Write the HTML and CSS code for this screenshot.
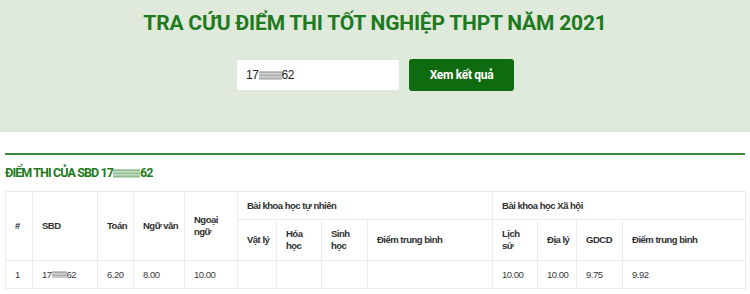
FILE: index.html
```html
<!DOCTYPE html>
<html lang="vi">
<head>
<meta charset="utf-8">
<title>Tra cứu điểm thi</title>
<link rel="stylesheet" href="styles.css">
</head>
<body>
<header class="hero">
  <h1 class="title">TRA CỨU ĐIỂM THI TỐT NGHIỆP THPT NĂM 2021</h1>
  <div class="search">
    <div class="input">17<span class="redact"></span>62</div>
    <button class="btn" type="button">Xem kết quả</button>
  </div>
</header>
<main class="results">
  <div class="rule"></div>
  <h2 class="heading">ĐIỂM THI CỦA SBD 17<span class="redact redact-green"></span>62</h2>
  <table class="scores">
    <colgroup>
      <col class="c27"><col class="c65"><col class="c36"><col class="c51"><col class="c53">
      <col class="c39"><col class="c45"><col class="c46"><col class="c125">
      <col class="c45"><col class="c39"><col class="c46"><col class="c123">
    </colgroup>
    <thead>
      <tr class="r1">
        <th rowspan="2">#</th>
        <th rowspan="2">SBD</th>
        <th rowspan="2">Toán</th>
        <th rowspan="2" class="nowrap">Ngữ văn</th>
        <th rowspan="2">Ngoại ngữ</th>
        <th colspan="4">Bài khoa học tự nhiên</th>
        <th colspan="4">Bài khoa học Xã hội</th>
      </tr>
      <tr class="r2">
        <th class="nowrap">Vật lý</th>
        <th>Hóa học</th>
        <th>Sinh học</th>
        <th>Điểm trung bình</th>
        <th>Lịch sử</th>
        <th class="nowrap">Địa lý</th>
        <th>GDCD</th>
        <th>Điểm trung bình</th>
      </tr>
    </thead>
    <tbody>
      <tr class="r3">
        <td>1</td>
        <td>17<span class="redact redact-sm"></span>62</td>
        <td>6.20</td>
        <td>8.00</td>
        <td>10.00</td>
        <td></td>
        <td></td>
        <td></td>
        <td></td>
        <td>10.00</td>
        <td>10.00</td>
        <td>9.75</td>
        <td>9.92</td>
      </tr>
    </tbody>
  </table>
</main>
</body>
</html>
```
FILE: styles.css
```css
* { box-sizing: border-box; }
html, body { margin: 0; padding: 0; background: #ffffff; }
body { font-family: "Liberation Sans", Arial, sans-serif; color: #333; }

.hero {
  height: 132px;
  background: #dfe9dc;
  padding-top: 11px;
  display: flex;
  flex-direction: column;
  align-items: center;
}
.title {
  margin: 0;
  font-family: Roboto, "Liberation Sans", sans-serif;
  font-weight: 700;
  font-size: 21px;
  line-height: 24px;
  color: #1d7a1d;
  letter-spacing: -0.2px;
}
.search {
  margin-top: 24px;
  display: flex;
  align-items: center;
  gap: 10px;
  margin-left: 1px;
}
.input {
  width: 162px;
  height: 30px;
  background: #fff;
  border-radius: 2px;
  padding-left: 9px;
  display: flex;
  align-items: center;
  font-family: "Liberation Sans", Arial, sans-serif;
  font-size: 12px;
  letter-spacing: -0.4px;
  color: #222;
}
.btn {
  width: 105px;
  height: 32px;
  border: 0;
  border-radius: 3px;
  background: #0f6b0f;
  color: #fff;
  font-family: Roboto, "Liberation Sans", sans-serif;
  font-weight: 700;
  font-size: 12px;
  letter-spacing: -0.3px;
  padding: 0;
}

.redact {
  display: inline-block;
  width: 23px;
  height: 9px;
  vertical-align: -1px;
  background: repeating-linear-gradient(180deg, #b9b9b9 0 1px, #9d9d9d 1px 2px, #c6c6c6 2px 3px);
  opacity: 0.85;
}
.redact-green {
  width: 27px;
  background: repeating-linear-gradient(180deg, #9fc79f 0 1px, #7fb07f 1px 2px, #b6d6b6 2px 3px);
}
.redact-sm {
  width: 15px;
  height: 7px;
  vertical-align: 0;
}

.results { padding: 0 5px; }
.rule {
  margin-top: 21px;
  height: 2px;
  background: #3b8a3b;
}
.heading {
  margin: 10px 0 0 0;
  font-family: Roboto, "Liberation Sans", sans-serif;
  font-weight: 700;
  font-size: 12.5px;
  line-height: 16px;
  color: #1d7a1d;
  letter-spacing: -0.9px;
}

.scores {
  margin-top: 10px;
  width: 740px;
  table-layout: fixed;
  border-collapse: collapse;
  font-size: 9.5px;
  letter-spacing: -0.5px;
}
.c27 { width: 27px; } .c65 { width: 65px; } .c36 { width: 36px; } .c51 { width: 51px; }
.c53 { width: 53px; } .c39 { width: 39px; } .c45 { width: 45px; } .c46 { width: 46px; }
.c125 { width: 125px; } .c123 { width: 123px; }

.scores th, .scores td {
  border: 1px solid #ececec;
  padding: 0 8px 0 9px;
  text-align: left;
  vertical-align: middle;
  line-height: 12px;
}
.scores th { font-weight: 700; color: #2e2e2e; }
.scores td { color: #3a3a3a; }
.scores .nowrap { white-space: nowrap; }
.r1 { height: 28px; }
.r2 { height: 41px; }
.r3 { height: 28px; }
```
